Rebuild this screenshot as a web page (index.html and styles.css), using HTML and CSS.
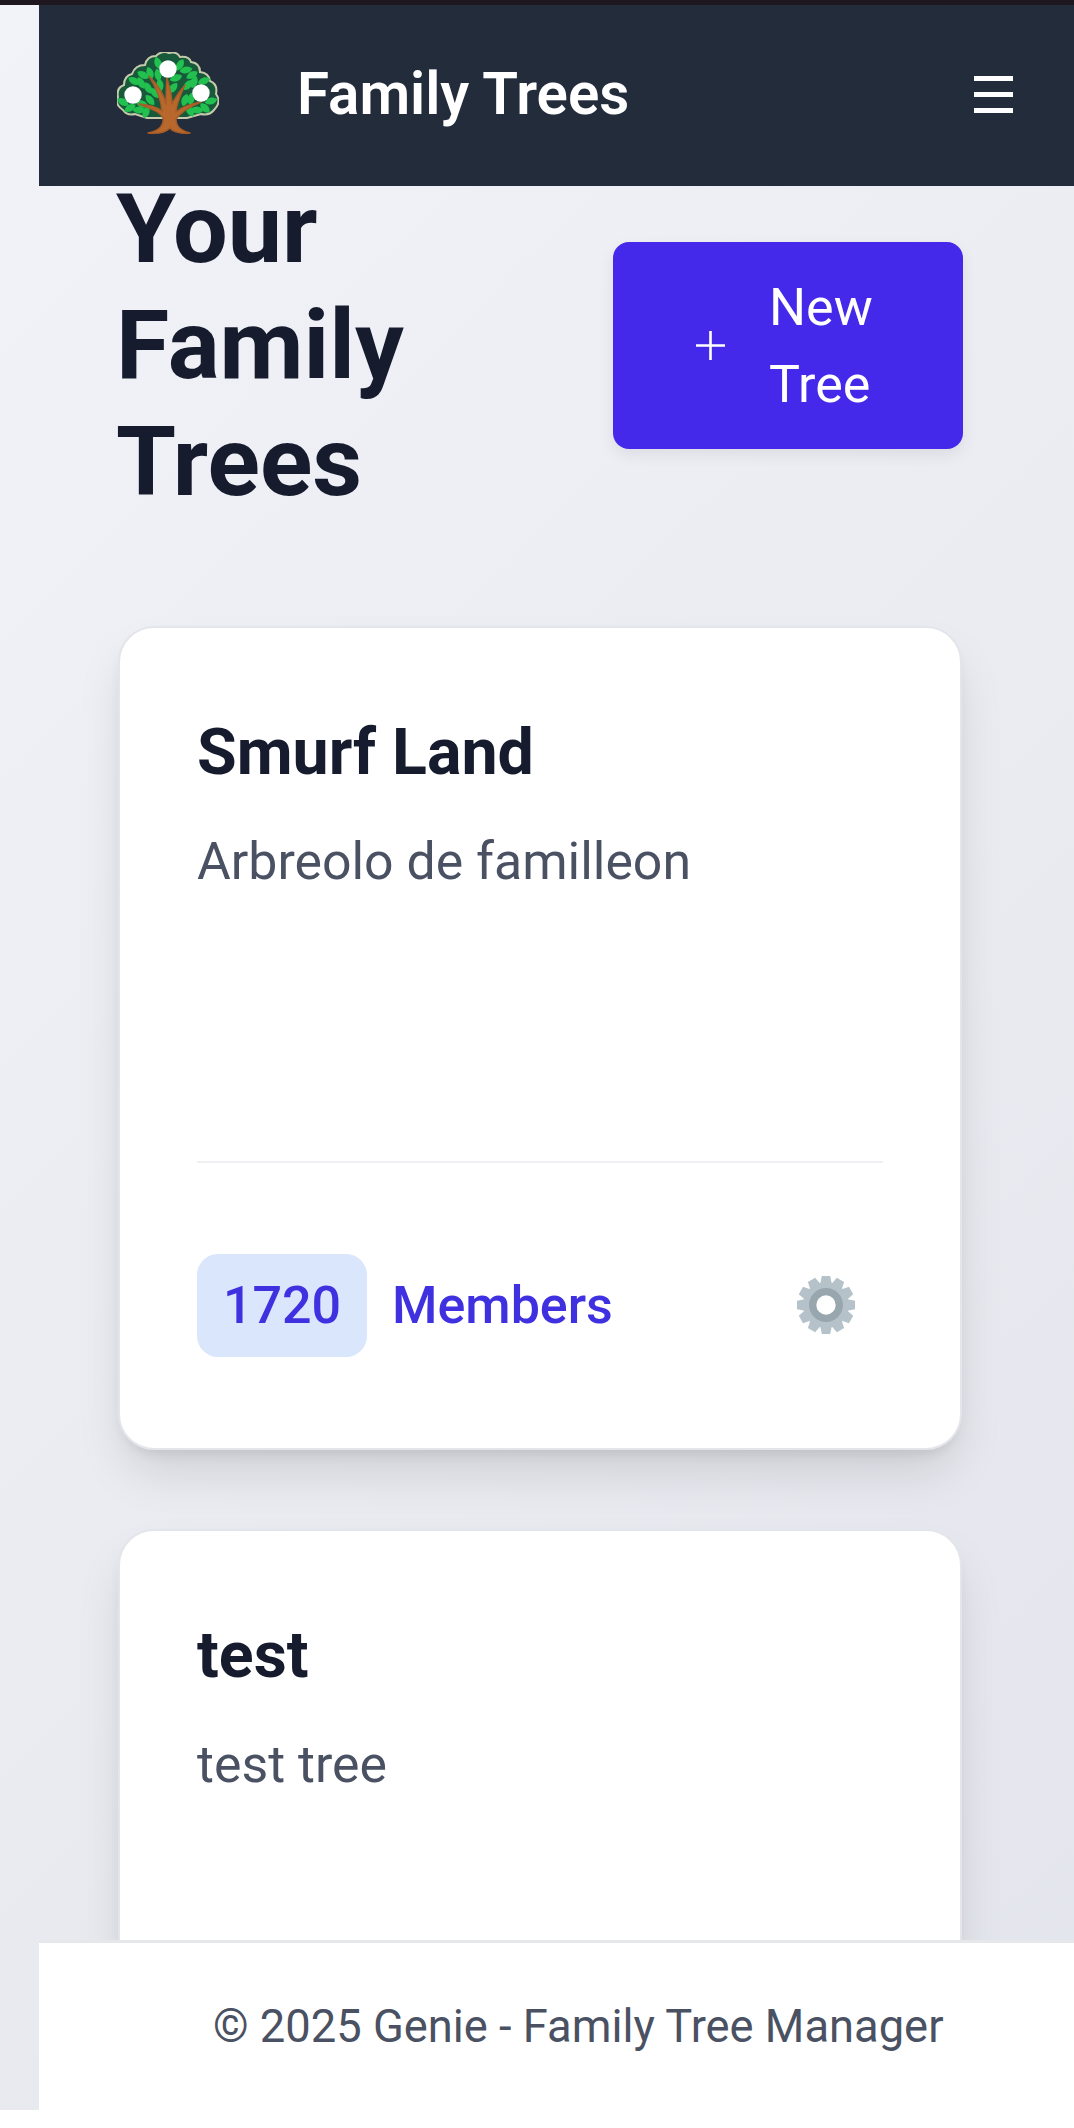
FILE: index.html
```html
<!DOCTYPE html>
<html lang="en">
<head>
    <meta charset="UTF-8">
    <meta name="viewport" content="width=device-width, initial-scale=1.0">
    <title>Family Trees</title>
    <link rel="stylesheet" href="styles.css">
</head>
<body>
    <div class="status-strip"></div>
    <div class="app">
        <header class="navbar">
            <svg class="logo" viewBox="0 0 102 82" aria-label="Family tree logo">
                <defs>
                    <path id="leaf" d="M-6.5 0C-3-4.6 3-4.6 6.5 0 3 4.6-3 4.6-6.5 0Z" fill="#21c04f"/>
                </defs>
                <!-- crown -->
                <path d="M6 58Q-3 52 1 45-1 36 7 33 7 24 15 22 18 13 28 13 30 4 39 4 45-2 52 1 60-1 63 5 72 4 74 10 83 11 83 20 92 21 93 29 101 32 99 42 105 50 97 58 92 64 84 62L70 66H30L18 62Q10 64 6 58Z" fill="#17593a" stroke="#c4cbaa" stroke-width="2"/>
                <!-- leaves -->
                <use href="#leaf" transform="translate(41 11) rotate(70)"/>
                <use href="#leaf" transform="translate(63 13) rotate(-60)"/>
                <use href="#leaf" transform="translate(69 18) rotate(-10)"/>
                <use href="#leaf" transform="translate(33 21) rotate(70)"/>
                <use href="#leaf" transform="translate(41 23) rotate(80)"/>
                <use href="#leaf" transform="translate(59 26) rotate(-20)"/>
                <use href="#leaf" transform="translate(75 23) rotate(-30)"/>
                <use href="#leaf" transform="translate(26 23) rotate(30)"/>
                <use href="#leaf" transform="translate(17 29) rotate(30)"/>
                <use href="#leaf" transform="translate(24 31) rotate(60)"/>
                <use href="#leaf" transform="translate(31 36) rotate(60)"/>
                <use href="#leaf" transform="translate(87 29) rotate(-20)"/>
                <use href="#leaf" transform="translate(77 30) rotate(-70)"/>
                <use href="#leaf" transform="translate(71 33) rotate(-50)"/>
                <use href="#leaf" transform="translate(56 36) rotate(-50)"/>
                <use href="#leaf" transform="translate(43 33) rotate(80)"/>
                <use href="#leaf" transform="translate(38 41) rotate(50)"/>
                <use href="#leaf" transform="translate(33 48) rotate(50)"/>
                <use href="#leaf" transform="translate(6 50) rotate(30)"/>
                <use href="#leaf" transform="translate(25 52) rotate(20)"/>
                <use href="#leaf" transform="translate(13 56) rotate(-30)"/>
                <use href="#leaf" transform="translate(22 58)"/>
                <use href="#leaf" transform="translate(29 60) rotate(-70)"/>
                <use href="#leaf" transform="translate(73 59) rotate(60)"/>
                <use href="#leaf" transform="translate(80 58) rotate(5)"/>
                <use href="#leaf" transform="translate(88 56) rotate(45)"/>
                <use href="#leaf" transform="translate(94 49) rotate(-15)"/>
                <use href="#leaf" transform="translate(68 48) rotate(-70)"/>
                <use href="#leaf" transform="translate(74 47) rotate(-80)"/>
                <!-- trunk -->
                <path d="M31 81C41 79 47 74 46 66 43 60 35 57 22 52 33 53 40 55 45 59 44 48 40 37 32 24 41 33 47 43 49 52 49 44 49 36 50 26 53 36 55 44 55 52 58 46 62 40 68 33 64 42 60 50 59 60 64 56 72 52 84 50 74 54 64 60 59 67 59 74 64 79 73 81 64 82 56 80 53 76 49 80 41 82 31 81Z" fill="#b8682c" stroke="#a85c26" stroke-width="1.4" stroke-linejoin="round"/>
                <!-- member dots -->
                <circle cx="16" cy="43" r="8.7" fill="#fff"/>
                <circle cx="51" cy="17" r="8.7" fill="#fff"/>
                <circle cx="84" cy="41" r="8.7" fill="#fff"/>
            </svg>
            <span class="brand">Family Trees</span>
            <button class="menu-btn" aria-label="Menu">
                <span></span>
                <span></span>
                <span></span>
            </button>
        </header>

        <main class="content">
            <div class="page-head">
                <h1>Your Family Trees</h1>
                <button class="new-tree">
                    <svg class="plus" viewBox="0 0 29 29"><path d="M14.5 0V29M0 14.5H29" stroke="#fff" stroke-width="2.6"/></svg>
                    <span class="new-label">New Tree</span>
                </button>
            </div>

            <section class="tree-card">
                <h2>Smurf Land</h2>
                <p class="tree-desc">Arbreolo de familleon</p>
                <div class="tree-foot">
                    <span class="count">1720</span>
                    <span class="members">Members</span>
                    <button class="settings" aria-label="Settings">
                        <svg class="gear" viewBox="-30 -30 60 60">
                            <defs>
                                <path id="tooth" d="M-6-20-4.2-29H4.2L6-20Z" fill="#b5c2c9"/>
                            </defs>
                            <use href="#tooth"/>
                            <use href="#tooth" transform="rotate(30)"/>
                            <use href="#tooth" transform="rotate(60)"/>
                            <use href="#tooth" transform="rotate(90)"/>
                            <use href="#tooth" transform="rotate(120)"/>
                            <use href="#tooth" transform="rotate(150)"/>
                            <use href="#tooth" transform="rotate(180)"/>
                            <use href="#tooth" transform="rotate(210)"/>
                            <use href="#tooth" transform="rotate(240)"/>
                            <use href="#tooth" transform="rotate(270)"/>
                            <use href="#tooth" transform="rotate(300)"/>
                            <use href="#tooth" transform="rotate(330)"/>
                            <circle r="23" fill="#b5c2c9"/>
                            <circle r="17" fill="#98a6ad"/>
                            <circle r="9.7" fill="#fff"/>
                        </svg>
                    </button>
                </div>
            </section>

            <section class="tree-card">
                <h2>test</h2>
                <p class="tree-desc">test tree</p>
            </section>
        </main>

        <footer class="site-footer">&copy; 2025 Genie - Family Tree Manager</footer>
    </div>
</body>
</html>
```

FILE: styles.css
```css
* {
    box-sizing: border-box;
}
html, body {
    height: 100%;
}
body {
    margin: 0;
    background: #fff;
    font-family: 'Roboto', sans-serif;
    overflow: hidden;
}
.status-strip {
    height: 5px;
    background: #1f1720;
}
.app {
    height: 2105px;
    padding-left: 39px;
    display: flex;
    flex-direction: column;
    background: linear-gradient(135deg, #f1f3f8 0%, #e3e5ec 100%);
}
.navbar {
    position: relative;
    z-index: 2;
    flex: none;
    height: 181px;
    padding: 0 61px 0 78px;
    display: flex;
    align-items: center;
    background: #232c3b;
    color: #fff;
}
.logo {
    flex: none;
    width: 102px;
    height: 82px;
    margin: 0 78px 5px 0;
}
.brand {
    margin-bottom: 3px;
    font-size: 58.3px;
    font-weight: 600;
}
.menu-btn {
    margin: 0 0 2px auto;
    width: 39px;
    padding: 0;
    display: flex;
    flex-direction: column;
    gap: 11px;
    border: none;
    background: none;
}
.menu-btn span {
    height: 5px;
    background: #fff;
}
.content {
    flex: 1;
    min-height: 0;
    overflow: hidden;
    margin-top: -15px;
    padding: 0 112px 0 79px;
}
.page-head {
    display: flex;
    justify-content: space-between;
    align-items: center;
    margin-bottom: 106px;
}
h1 {
    width: 340px;
    margin: 0 0 0 -2px;
    font-size: 97px;
    line-height: 116.4px;
    font-weight: 700;
    color: #161b2e;
}
.new-tree {
    width: 350px;
    height: 207px;
    margin-right: -1px;
    padding: 0 0 0 83px;
    display: flex;
    align-items: center;
    gap: 44px;
    border: none;
    border-radius: 16px;
    background: #4429eb;
    color: #fff;
    font-family: inherit;
    font-size: 52px;
    line-height: 77px;
    box-shadow: 0 6px 16px rgba(0, 0, 0, 0.07);
}
.plus {
    flex: none;
    width: 29px;
    height: 29px;
}
.new-label {
    width: 106px;
    text-align: left;
}
.tree-card {
    height: 824px;
    margin-bottom: 79px;
    padding: 86px 77px 0;
    background: #fff;
    border: 2px solid #e3e5ea;
    border-radius: 36px;
    box-shadow: 0 27px 50px -8px rgba(0, 0, 0, 0.13), 0 8px 14px -6px rgba(0, 0, 0, 0.1);
}
h2 {
    margin: 0;
    font-size: 64.5px;
    line-height: 1.2;
    font-weight: 700;
    color: #161b2e;
}
.tree-desc {
    height: 338px;
    margin: 31px 0 0;
    font-size: 51.8px;
    line-height: 1.5;
    color: #4a5163;
}
.tree-foot {
    padding-top: 91px;
    display: flex;
    align-items: center;
    border-top: 2px solid #f0f1f4;
}
.count {
    width: 170px;
    height: 103px;
    display: flex;
    align-items: center;
    justify-content: center;
    border-radius: 21px;
    background: #d9e6fc;
    color: #3f30e0;
    font-size: 52px;
    font-weight: 500;
}
.members {
    margin-left: 25px;
    color: #3f30e0;
    font-size: 52px;
    font-weight: 500;
}
.settings {
    margin-left: auto;
    margin-right: 27px;
    padding: 0;
    display: flex;
    border: none;
    background: none;
}
.gear {
    width: 60px;
    height: 60px;
}
.site-footer {
    position: relative;
    z-index: 2;
    flex: none;
    height: 170px;
    padding-left: 174px;
    display: flex;
    align-items: center;
    background: #fff;
    border-top: 3px solid #e5e7eb;
    color: #4a5163;
    font-size: 45.3px;
}
```
